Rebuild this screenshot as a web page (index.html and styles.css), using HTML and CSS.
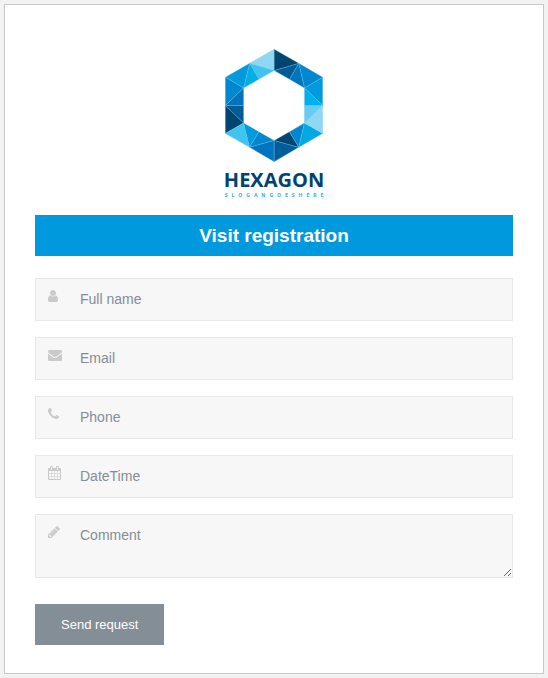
FILE: index.html
```html
<!DOCTYPE html>
<html lang="en">
<head>
<meta charset="utf-8">
<meta name="viewport" content="width=device-width, initial-scale=1">
<title>Visit registration</title>
<link rel="stylesheet" href="styles.css">
</head>
<body>
<main class="card">
  <div class="brand">
    <svg class="brand-mark" viewBox="33 25 295 340" aria-hidden="true">
      <g stroke="#7cc4ea" stroke-opacity=".6" stroke-width="1.5" stroke-linejoin="round">
        <path fill="#8fd8f3" d="M181 26L107 68L181 90Z"/>
        <path fill="#40c4ef" d="M107 68L181 90L135 116Z"/>
        <path fill="#00aee8" d="M107 68L135 116L89 142Z"/>
        <path fill="#009add" d="M107 68L89 142L34 110Z"/>
        <path fill="#0087cf" d="M34 110L89 142L34 195Z"/>
        <path fill="#0074bd" d="M89 142L34 195L89 195Z"/>
        <path fill="#005b96" d="M34 195L89 195L89 248Z"/>
        <path fill="#004470" d="M34 195L89 248L34 279Z"/>
        <path fill="#40c4ef" d="M34 279L89 248L107 321Z"/>
        <path fill="#009add" d="M89 248L107 321L135 274Z"/>
        <path fill="#0087cf" d="M107 321L135 274L181 300Z"/>
        <path fill="#0074bd" d="M107 321L181 300L181 364Z"/>
        <path fill="#005f9b" d="M181 300L181 364L255 321Z"/>
        <path fill="#004470" d="M181 300L227 274L255 321Z"/>
        <path fill="#0087cf" d="M227 274L272 248L255 321Z"/>
        <path fill="#00a8e6" d="M272 248L327 279L255 321Z"/>
        <path fill="#8fd8f3" d="M272 248L327 195L327 279Z"/>
        <path fill="#66cdf1" d="M272 248L272 195L327 195Z"/>
        <path fill="#00b0ea" d="M272 142L272 195L327 195Z"/>
        <path fill="#009add" d="M272 142L327 195L327 110Z"/>
        <path fill="#0087cf" d="M255 68L327 110L272 142Z"/>
        <path fill="#0074bd" d="M255 68L272 142L227 116Z"/>
        <path fill="#005b96" d="M255 68L227 116L181 90Z"/>
        <path fill="#004470" d="M181 26L255 68L181 90Z"/>
      </g>
    </svg>
    <div class="brand-name">HEXAGON</div>
    <div class="brand-slogan">SLOGANGOESHERE</div>
  </div>
  <h1 class="title">Visit registration</h1>
  <form class="form">
    <div class="field">
      <svg class="icon" viewBox="0 0 1280 1792" aria-hidden="true"><path d="M1280 1399q0 109-62.5 187t-150.5 78h-854q-88 0-150.5-78t-62.5-187q0-85 8.5-160.5t31.5-152 58.5-131 94-89 134.5-34.5q131 128 313 128t313-128q76 0 134.5 34.5t94 89 58.5 131 31.5 152 8.5 160.5zm-256-887q0 159-112.5 271.5t-271.5 112.5-271.5-112.5-112.5-271.5 112.5-271.5 271.5-112.5 271.5 112.5 112.5 271.5z"/></svg>
      <input class="control" type="text" name="name" placeholder="Full name" aria-label="Full name">
    </div>
    <div class="field">
      <svg class="icon" viewBox="0 0 1792 1792" aria-hidden="true"><path d="M1792 710v794q0 66-47 113t-113 47h-1472q-66 0-113-47t-47-113v-794q44 49 101 87 362 246 497 345 57 42 92.5 65.5t94.5 48 110 24.5h2q51 0 110-24.5t94.5-48 92.5-65.5q170-123 498-345 57-39 100-87zm0-294q0 79-49 151t-122 123q-376 261-468 325-10 7-42.5 31t-54 38.5-52 32.5-57.5 27-50 9h-2q-23 0-50-9t-57.5-27-52-32.5-54-38.5-42.5-31q-91-64-262-182.5t-205-142.5q-62-42-117-115.5t-55-136.5q0-78 41.5-130t118.5-52h1472q65 0 112.5 47t47.5 113z"/></svg>
      <input class="control" type="email" name="email" placeholder="Email" aria-label="Email">
    </div>
    <div class="field">
      <svg class="icon" viewBox="0 0 1408 1792" aria-hidden="true"><path d="M1408 1240q0 27-10 70.5t-21 68.5q-21 50-122 106-94 51-186 51-27 0-53-3.5t-57.5-12.5-47-14.5-55.5-20.5-49-18q-98-35-175-83-127-79-264-216t-216-264q-48-77-83-175-3-9-18-49t-20.5-55.5-14.5-47-12.5-57.5-3.5-53q0-92 51-186 56-101 106-122 25-11 68.5-21t70.5-10q14 0 21 3 18 6 53 76 11 19 30 54t35 63.5 31 53.5q3 4 17.5 25t21.5 35.5 7 28.5q0 20-28.5 50t-62 55-62 53-28.5 46q0 9 5 22.5t8.5 20.5 14 24 11.5 19q76 137 174 235t235 174q2 1 19 11.5t24 14 20.5 8.5 22.5 5q18 0 46-28.5t53-62 55-62 50-28.5q14 0 28.5 7t35.5 21.5 25 17.5q25 15 53.5 31t63.5 35 54 30q70 35 76 53 3 7 3 21z"/></svg>
      <input class="control" type="tel" name="phone" placeholder="Phone" aria-label="Phone">
    </div>
    <div class="field">
      <svg class="icon" viewBox="0 0 1664 1792" aria-hidden="true"><path d="M128 1664h288v-288h-288v288zm352 0h320v-288h-320v288zm-352-352h288v-320h-288v320zm352 0h320v-320h-320v320zm-352-384h288v-288h-288v288zm736 736h320v-288h-320v288zm-384-736h320v-288h-320v288zm768 736h288v-288h-288v288zm-384-352h320v-320h-320v320zm-352-864v-288q0-13-9.5-22.5t-22.5-9.5h-64q-13 0-22.5 9.5t-9.5 22.5v288q0 13 9.5 22.5t22.5 9.5h64q13 0 22.5-9.5t9.5-22.5zm736 864h288v-320h-288v320zm-384-384h320v-288h-320v288zm384 0h288v-288h-288v288zm32-480v-288q0-13-9.5-22.5t-22.5-9.5h-64q-13 0-22.5 9.5t-9.5 22.5v288q0 13 9.5 22.5t22.5 9.5h64q13 0 22.5-9.5t9.5-22.5zm384-64v1280q0 52-38 90t-90 38h-1408q-52 0-90-38t-38-90v-1280q0-52 38-90t90-38h128v-96q0-66 47-113t113-47h64q66 0 113 47t47 113v96h384v-96q0-66 47-113t113-47h64q66 0 113 47t47 113v96h128q52 0 90 38t38 90z"/></svg>
      <input class="control" type="text" name="datetime" placeholder="DateTime" aria-label="DateTime">
    </div>
    <div class="field">
      <svg class="icon" viewBox="0 0 1536 1792" aria-hidden="true"><path d="M363 1536l91-91-235-235-91 91v107h128v128h107zm523-928q0-22-22-22-10 0-17 7l-542 542q-7 7-7 17 0 22 22 22 10 0 17-7l542-542q7-7 7-17zm-54-192l416 416-832 832h-416v-416zm683 96q0 53-37 90l-166 166-416-416 166-165q36-38 90-38 53 0 91 38l235 234q37 39 37 91z"/></svg>
      <textarea class="control control-area" name="comment" placeholder="Comment" aria-label="Comment"></textarea>
    </div>
    <button class="submit" type="submit">Send request</button>
  </form>
</main>
</body>
</html>
```
FILE: styles.css
```css
*,
*::before,
*::after {
  box-sizing: border-box;
}

body {
  margin: 0;
  padding: 4px;
  background: #f2f2f2;
  font-family: "Liberation Sans", Arial, Helvetica, sans-serif;
  font-size: 14px;
}

.card {
  padding: 44px 30px 28px;
  background: #fff;
  border: 1px solid #c8c8c8;
}

.brand {
  display: flex;
  flex-direction: column;
  align-items: center;
  margin-bottom: 16px;
}

.brand-mark {
  display: block;
  height: 113px;
  margin-bottom: 7px;
}

.brand-name {
  color: #004370;
  font-family: "Open Sans", "Noto Sans", sans-serif;
  font-size: 20px;
  font-weight: 700;
  line-height: 22px;
}

.brand-slogan {
  color: #1fb0e6;
  font-family: "Open Sans", "Noto Sans", sans-serif;
  font-size: 5px;
  font-weight: 700;
  line-height: 8px;
  letter-spacing: 4px;
  padding-left: 4px;
}

.title {
  margin: 0 0 22px;
  background: #0099de;
  color: #fff;
  font-size: 19px;
  font-weight: 700;
  line-height: 41px;
  text-align: center;
}

.form {
  display: flex;
  flex-direction: column;
  gap: 16px;
}

.field {
  position: relative;
  display: flex;
}

.icon {
  position: absolute;
  top: 11px;
  left: 13px;
  height: 14px;
  fill: #cacaca;
  pointer-events: none;
}

.control {
  width: 100%;
  height: 43px;
  margin: 0;
  padding: 11px 12px 13px 44px;
  background: #f7f7f7;
  border: 1px solid #e8e8e8;
  border-radius: 0;
  color: #55606a;
  font: inherit;
  line-height: 17px;
}

.control::placeholder {
  color: #838e97;
  opacity: 1;
}

.control-area {
  height: 64px;
  padding-top: 12px;
  resize: vertical;
}

.submit {
  align-self: flex-start;
  margin-top: 10px;
  padding: 12px 26px;
  background: #838e97;
  border: 0;
  color: #fff;
  font-family: inherit;
  font-size: 13px;
  line-height: 17px;
}
```
